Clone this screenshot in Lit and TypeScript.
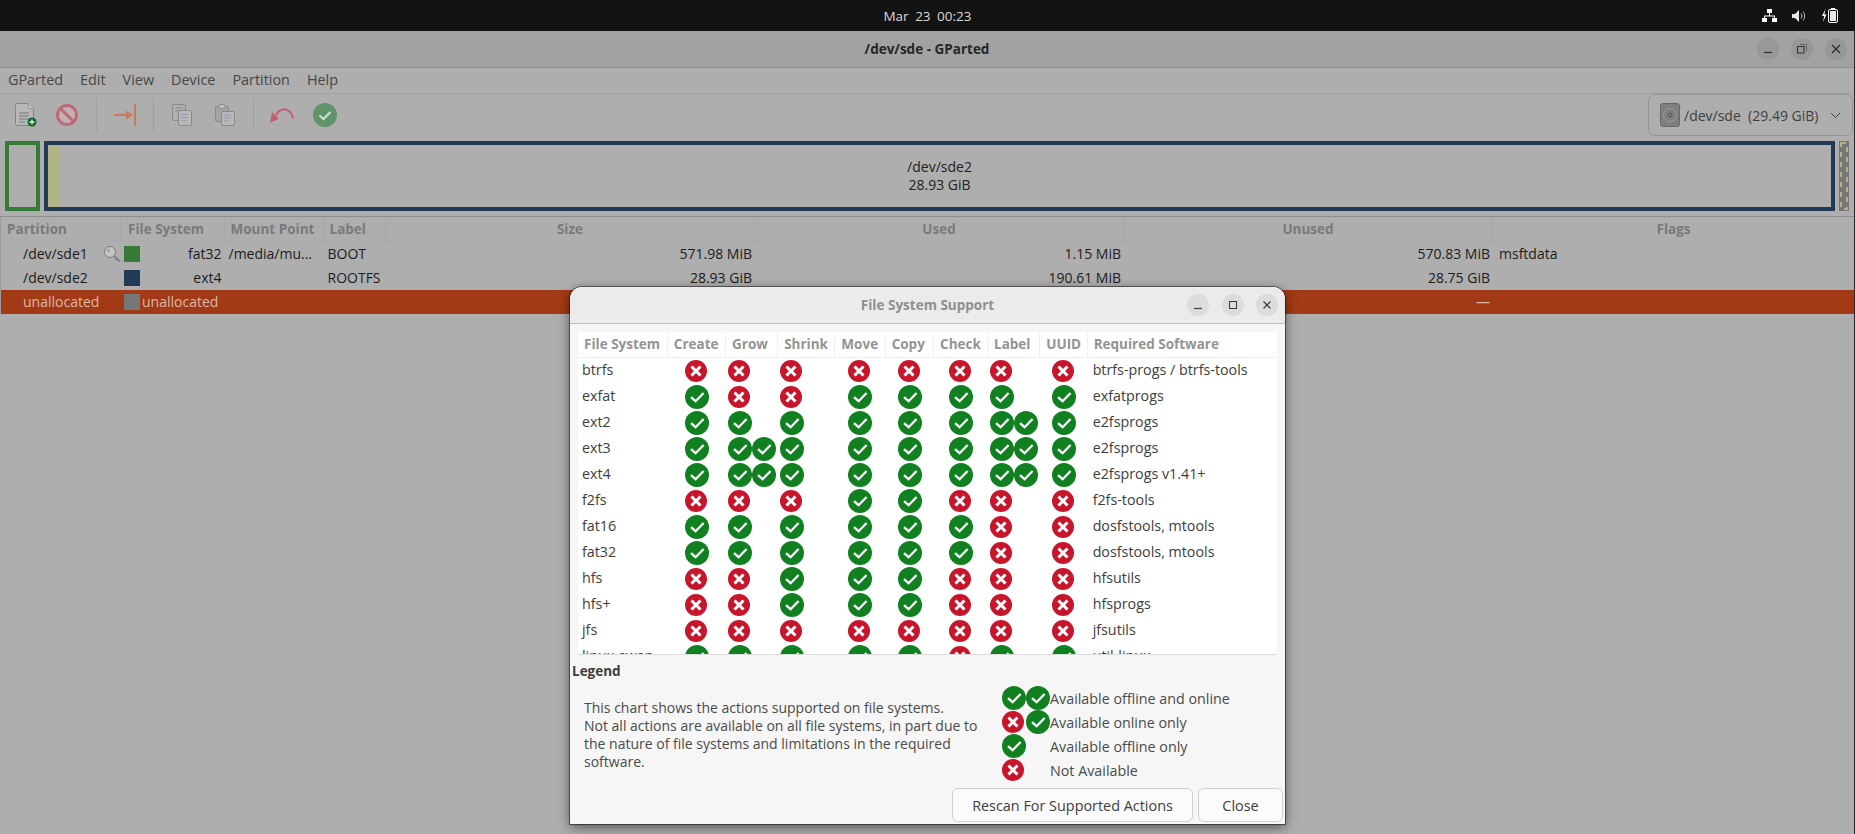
import { LitElement, html, css, svg } from 'lit';
import { customElement } from 'lit/decorators.js';

type Mark = 'y' | 'n' | 'b' | 'o';

const FS_COLUMNS = ['File System', 'Create', 'Grow', 'Shrink', 'Move', 'Copy', 'Check', 'Label', 'UUID', 'Required Software'];

const FS_ROWS: [string, string, string][] = [
  ['btrfs', 'nnnnnnnn', 'btrfs-progs / btrfs-tools'],
  ['exfat', 'ynnyyyyy', 'exfatprogs'],
  ['ext2', 'yyyyyyby', 'e2fsprogs'],
  ['ext3', 'ybyyyyby', 'e2fsprogs'],
  ['ext4', 'ybyyyyby', 'e2fsprogs v1.41+'],
  ['f2fs', 'nnnyynnn', 'f2fs-tools'],
  ['fat16', 'yyyyyynn', 'dosfstools, mtools'],
  ['fat32', 'yyyyyynn', 'dosfstools, mtools'],
  ['hfs', 'nnyyynnn', 'hfsutils'],
  ['hfs+', 'nnyyynnn', 'hfsprogs'],
  ['jfs', 'nnnnnnnn', 'jfsutils'],
  ['linux-swap', 'yyyyynyy', 'util-linux'],
];

const PARTITIONS = [
  { name: '/dev/sde1', key: true, swatch: 'fat', fs: 'fat32', mount: '/media/mu...', label: 'BOOT', size: '571.98 MiB', used: '1.15 MiB', unused: '570.83 MiB', flags: 'msftdata' },
  { name: '/dev/sde2', key: false, swatch: 'ext', fs: 'ext4', mount: '', label: 'ROOTFS', size: '28.93 GiB', used: '190.61 MiB', unused: '28.75 GiB', flags: '' },
];

const yes = () => html`<svg class="mark" width="24" height="24" viewBox="0 0 24 24">
  <circle cx="12" cy="12" r="12" fill="#108020"/>
  <path d="M6 12.2l4.6 4L18.6 8" fill="none" stroke="#fff" stroke-width="2.3"/>
</svg>`;

const no = () => html`<svg class="mark" width="22" height="22" viewBox="0 0 22 22">
  <circle cx="11" cy="11" r="11" fill="#c7162b"/>
  <path d="M6.500 6.500l9 9M15.500 6.500l-9 9" fill="none" stroke="#fff" stroke-width="3"/>
</svg>`;

function marks(m: Mark) {
  if (m === 'y') return html`<span class="slot">${yes()}</span>`;
  if (m === 'n') return html`<span class="slot">${no()}</span>`;
  if (m === 'b') return html`<span class="slot">${yes()}</span><span class="slot">${yes()}</span>`;
  return html`<span class="slot">${no()}</span><span class="slot">${yes()}</span>`;
}

const docLines = svg`<path d="M11 11h7M11 14h7M11 17h5" stroke="#9a98bc" stroke-width="1" fill="none"/>`;

@customElement('app-root')
export class AppRoot extends LitElement {
  static styles = css`
    :host {
      display: block;
      position: relative;
      width: 1855px;
      height: 834px;
      overflow: hidden;
      background: #aeaeae;
      font-family: "Open Sans", "Noto Sans", sans-serif;
      font-size: 14px;
      color: #1c1c1c;
    }
    svg { display: block; flex: none; }

    .topbar {
      height: 31px;
      background: #131313;
      color: #d8d8d8;
      display: grid;
      grid-template-columns: 1fr auto 1fr;
      align-items: center;
      font-size: 13.5px;
    }
    .clock { word-spacing: 3px; }
    .tray { display: flex; justify-content: flex-end; align-items: center; gap: 15px; padding-right: 17px; }

    .win { border-right: 1px solid #33202c; height: 803px; }
    .titlebar {
      height: 36px;
      background: #a2a2a2;
      border-bottom: 1px solid #8b8b8b;
      display: grid;
      grid-template-columns: 1fr auto 1fr;
      align-items: center;
      font-weight: 700;
      font-size: 13.5px;
      color: #262626;
    }
    .controls { display: flex; justify-content: flex-end; gap: 12px; padding-right: 7px; }
    .ctl {
      width: 22px;
      height: 22px;
      border-radius: 50%;
      background: #979797;
      display: flex;
      align-items: center;
      justify-content: center;
    }
    .menu {
      height: 25px;
      box-sizing: border-box;
      height: 26px;
      padding: 0 0 2px 8px;
      border-bottom: 1px solid #a0a0a0;
      display: flex;
      align-items: center;
      gap: 17px;
      color: #474747;
      font-size: 14.4px;
    }
    .toolbar {
      height: 47px;
      display: flex;
      align-items: center;
      padding: 0 1px 5px 15px;
      box-sizing: border-box;
    }
    .tools { display: flex; align-items: center; gap: 19px; }
    .tools.wide { gap: 23px; }
    .sep { width: 1px; height: 34px; background: #a0a0a0; margin: 0 17px 0 18px; }
    .sep.b { margin: 0 18px 0 17px; }
    .sep.c { margin: 0 16px 0 18px; }
    .combo {
      margin-left: auto;
      width: 205px;
      height: 42px;
      box-sizing: border-box;
      border: 1px solid #949494;
      border-radius: 7px;
      display: flex;
      align-items: center;
      padding: 0 11px;
      gap: 4px;
      color: #404040;
    }
    .combo .chev { margin-left: auto; }

    .bar { height: 70px; display: flex; padding-left: 5px; margin-bottom: 5px; }
    .bar > * { box-sizing: border-box; height: 70px; }
    .p1 { width: 35px; border: 4px solid #357a35; margin-right: 4px; }
    .p2 {
      width: 1791px;
      border: 4px solid #213a55;
      margin-right: 4px;
      display: flex;
    }
    .p2 .usedbar { width: 11px; background: #b2b486; }
    .p2 .cap {
      flex: 1;
      display: flex;
      flex-direction: column;
      align-items: center;
      justify-content: center;
      line-height: 18px;
      margin-right: 11px;
      color: #222;
    }

    .grid {
      border-top: 1px solid #8e8e8e;
      border-left: 1px solid #9c9c9c;
    }
    .row {
      display: grid;
      grid-template-columns: 120px 103.5px 99px 62.5px 369px 369px 369px 1fr;
      height: 24px;
      align-items: center;
    }
    .row.head {
      height: 24px;
      border-bottom: 1px solid #a8a8a8;
      color: #7a7a7a;
      font-weight: 700;
      font-size: 13.5px;
    }
    .row.head > div { border-right: 1px solid #a8a8a8; height: 24px; line-height: 24px; padding-left: 6px; box-sizing: border-box; }
    .row.head > .fshead { padding-left: 7px; }
    .row.head > .mid { text-align: center; padding-left: 0; }
    .row.head > div:last-child { border-right: none; }
    .row.sel { background: #a23a16; color: #d9b8a8; }
    .name { padding-left: 22px; display: flex; align-items: center; justify-content: space-between; }
    .name span { padding-bottom: 2px; }
    .fs { display: flex; align-items: center; padding-left: 3px; }
    .swatch { width: 16px; height: 16px; flex: none; }
    .swatch.fat { background: #357a35; }
    .swatch.ext { background: #213a55; }
    .swatch.none { background: #777; }
    .fs .txt { flex: 1; text-align: right; padding: 0 3px 2px 0; }
    .fs .left { padding: 0 0 2px 2px; }
    .mount, .lab { padding: 0 0 2px 4px; }
    .num { text-align: right; padding: 0 3px 2px 0; }
    .flagtxt { padding: 0 0 2px 6px; }

    .dialog {
      position: absolute;
      left: 570px;
      top: 287px;
      width: 715px;
      height: 537px;
      background: #f6f6f6;
      border-radius: 12px 12px 0 0;
      box-shadow: 0 0 0 1px rgba(0, 0, 0, 0.45), 0 3px 12px rgba(0, 0, 0, 0.55);
      color: #3d3d3d;
    }
    .dtitle {
      height: 36px;
      background: #ebebeb;
      border-radius: 12px 12px 0 0;
      border-bottom: 1px solid #bfbfbf;
      display: grid;
      grid-template-columns: 1fr auto 1fr;
      align-items: center;
      font-weight: 700;
      font-size: 13.5px;
      color: #8f8f8f;
    }
    .dtitle .ctl { background: #dcdcdc; }
    .dcontrols { display: flex; justify-content: flex-end; gap: 12.5px; padding-right: 7px; }
    .chart {
      margin: 8px 8px 0;
      height: 323px;
      background: #fff;
      overflow: hidden;
      border-bottom: 1px solid #dcdcdc;
      box-sizing: border-box;
      font-size: 14.3px;
    }
    .frow {
      display: grid;
      grid-template-columns: 89.8px 58.2px 52.2px 57.2px 50.3px 48.4px 54px 52.2px 47.4px 1fr;
      height: 26px;
      align-items: center;
    }
    .frow.fhead {
      height: 25px;
      border-bottom: 1px solid #f0f0f0;
      color: #939393;
      font-weight: 700;
      font-size: 13.5px;
    }
    .fhead > div { border-right: 1px solid #f0f0f0; height: 25px; line-height: 25px; padding-left: 6px; box-sizing: border-box; white-space: nowrap; overflow: hidden; }
    .fhead > div:last-child { border-right: none; }
    .fname { padding: 0 0 4px 4px; }
    .fsoft { padding: 0 0 4px 5px; }
    .cellm { display: flex; align-items: center; height: 26px; }
    .c1 { padding-left: 17.6px; }
    .c2 { padding-left: 2.4px; }
    .c3 { padding-left: 2.2px; }
    .c4 { padding-left: 13px; }
    .c5 { padding-left: 12.7px; }
    .c6 { padding-left: 15.3px; }
    .c7 { padding-left: 2.3px; }
    .c8 { padding-left: 12.1px; }
    .slot { width: 24px; height: 24px; flex: none; display: flex; align-items: center; }

    .legendhead { font-weight: 700; font-size: 13.5px; padding: 6px 0 0 2px; line-height: 20px; color: #3d3d3d; }
    .legend { display: flex; height: 98px; }
    .para { width: 432px; padding: 17.5px 0 0 14px; box-sizing: border-box; line-height: 18px; color: #4a4a4a; }
    .key { display: grid; grid-template-columns: 48px auto; grid-auto-rows: 24px; align-items: center; margin-top: 5px; font-size: 14.3px; }
    .key .pair { display: flex; align-items: center; }
    .key .t { color: #4a4a4a; }

    .buttons { display: flex; justify-content: flex-end; gap: 5px; padding-right: 2px; margin-top: 9px; }
    .btn {
      height: 34px;
      box-sizing: border-box;
      border: 1px solid #cfcfcf;
      border-radius: 6px;
      background: #fbfbfb;
      display: flex;
      align-items: center;
      justify-content: center;
      color: #3d3d3d;
      font-size: 14.4px;
    }
    .btn.rescan { width: 241px; }
    .btn.close { width: 85px; }
  `;

  render() {
    return html`
      <div class="topbar">
        <span></span>
        <span class="clock">Mar 23 00:23</span>
        <div class="tray">
          <svg width="15" height="14" viewBox="0 0 15 14" fill="#fff">
            <path d="M5 0h5v4H5zM0 9h5v4H0zM10 9h5v4h-5zM7 4h1v2.500h5V9h-1V7.500H3V9H2V6.500h5z"/>
          </svg>
          <svg width="14" height="12" viewBox="0 0 14 12">
            <path d="M0 4h3l4-4v12L3 8H0z" fill="#e8e8e8"/>
            <path d="M9 3.500a4 4 0 0 1 0 5M11 1.500a7 7 0 0 1 0 9" stroke="#bbb" fill="none"/>
          </svg>
          <svg width="17" height="15" viewBox="0 0 17 15">
            <path d="M4.500 1L1 8h2.200L2 14l3.500-7.500H3.300z" fill="#fff"/>
            <rect x="7.500" y="1.500" width="9" height="13" rx="1.500" fill="#131313" stroke="#fff"/>
            <rect x="9" y="3" width="6" height="10" fill="#e8e8e8"/>
            <rect x="10" y="0" width="4" height="1.500" fill="#fff"/>
          </svg>
        </div>
      </div>

      <div class="win">
        <div class="titlebar">
          <span></span>
          <span>/dev/sde - GParted</span>
          <div class="controls">
            <div class="ctl"><svg width="12" height="12" viewBox="0 0 12 12"><path d="M2 9.500h8" stroke="#2c2c2c" stroke-width="1.200"/></svg></div>
            <div class="ctl"><svg width="12" height="12" viewBox="0 0 12 12" fill="none" stroke="#2c2c2c"><rect x="1.500" y="3.500" width="6.500" height="6.500"/><path d="M4 1.500h6.500V8" stroke="#666"/></svg></div>
            <div class="ctl"><svg width="12" height="12" viewBox="0 0 12 12"><path d="M2 2l8 8M10 2l-8 8" stroke="#2c2c2c" stroke-width="1.200"/></svg></div>
          </div>
        </div>

        <div class="menu">
          <span>GParted</span><span>Edit</span><span>View</span><span>Device</span><span>Partition</span><span>Help</span>
        </div>

        <div class="toolbar">
          <div class="tools">
            <svg width="22" height="24" viewBox="0 0 22 24">
              <path d="M.5 2.500a2 2 0 0 1 2-2h11l5 5v15a2 2 0 0 1-2 2h-14a2 2 0 0 1-2-2z" fill="#b8b8b8" stroke="#868686"/>
              <path d="M13.500.5v5h5" fill="#c8c8c8" stroke="#969696"/>
              <path d="M4 10h10M4 13h10M4 16h10M4 19h6" stroke="#777" stroke-width="1"/>
              <circle cx="17" cy="19" r="4.500" fill="#0b6a26"/>
              <path d="M17 16.500v5M14.500 19h5" stroke="#e8f0e8" stroke-width="1.300"/>
            </svg>
            <svg width="22" height="22" viewBox="0 0 22 22">
              <circle cx="11" cy="11" r="9.500" fill="#c4b0b3" stroke="#bc6a76" stroke-width="3"/>
              <path d="M4.500 4.500l13 13" stroke="#bc6a76" stroke-width="3"/>
            </svg>
          </div>
          <div class="sep"></div>
          <svg width="22" height="22" viewBox="0 0 22 22">
            <path d="M0 11h13" stroke="#c67a5c" stroke-width="2"/>
            <path d="M12 6.500l7 4.500-7 4.500z" fill="#c67a5c"/>
            <path d="M21 0v22" stroke="#c67a5c" stroke-width="2"/>
          </svg>
          <div class="sep b"></div>
          <div class="tools wide">
            <svg width="20" height="22" viewBox="0 0 20 22">
              <rect x=".5" y=".5" width="13" height="16" rx="1.500" fill="#b0b0b0" stroke="#8a8a8a"/>
              <path d="M3 4h8M3 7h5" stroke="#8a8a8a"/>
              <rect x="6.500" y="6.500" width="13" height="15" rx="1.500" fill="#b8b8b8" stroke="#8a8a8a"/>
              <g transform="translate(-2 -.5)">${docLines}</g>
            </svg>
            <svg width="20" height="22" viewBox="0 0 20 22">
              <rect x=".5" y="2.500" width="13" height="15" rx="1.500" fill="#a4a4a4" stroke="#8a8a8a"/>
              <rect x="4" y=".5" width="6" height="4" rx="1" fill="#c0c0c0" stroke="#8a8a8a"/>
              <rect x="6.500" y="7.500" width="13" height="14" rx="1.500" fill="#b8b8b8" stroke="#8a8a8a"/>
              <g transform="translate(-2 0)">${docLines}</g>
            </svg>
          </div>
          <div class="sep c"></div>
          <div class="tools">
            <svg width="24" height="24" viewBox="0 0 24 24">
              <path d="M6 12.500C8 7 14 4.500 19 8c2 1.500 3.500 4 4 7.500" fill="none" stroke="#c46070" stroke-width="2"/>
              <path d="M0 19.500L2 9l7 7z" fill="#c46070"/>
            </svg>
            <svg width="24" height="24" viewBox="0 0 24 24">
              <circle cx="12" cy="12" r="12" fill="#5e9467"/>
              <path d="M6.500 12.500l4 3.500 7-7" fill="none" stroke="#d0dcd0" stroke-width="2.300"/>
            </svg>
          </div>
          <div class="combo">
            <svg width="20" height="24" viewBox="0 0 20 24">
              <rect x=".5" y=".5" width="19" height="23" rx="2.500" fill="#7e7e7e" stroke="#666"/>
              <circle cx="10" cy="12" r="6.500" fill="none" stroke="#9c9c9c"/>
              <circle cx="10" cy="12" r="2" fill="none" stroke="#555"/>
            </svg>
            <span>/dev/sde&nbsp; (29.49 GiB)</span>
            <svg class="chev" width="11" height="7" viewBox="0 0 11 7"><path d="M1 1l4.500 4.500L10 1" fill="none" stroke="#404040"/></svg>
          </div>
        </div>

        <div class="bar">
          <div class="p1"></div>
          <div class="p2">
            <div class="usedbar"></div>
            <div class="cap"><span>/dev/sde2</span><span>28.93 GiB</span></div>
          </div>
          <svg width="10" height="70" viewBox="0 0 10 70">
            <rect width="10" height="70" fill="#777"/>
            <rect x="2" y="2" width="6" height="66" fill="none" stroke="#b2b486" stroke-width="2" stroke-dasharray="5 5"/>
          </svg>
        </div>

        <div class="grid">
          <div class="row head">
            <div>Partition</div><div class="fshead">File System</div><div>Mount Point</div><div>Label</div>
            <div class="mid">Size</div><div class="mid">Used</div><div class="mid">Unused</div><div class="mid">Flags</div>
          </div>
          ${PARTITIONS.map(
            (p) => html`<div class="row">
              <div class="name">
                <span>${p.name}</span>
                ${p.key
                  ? html`<svg width="17" height="16" viewBox="0 0 17 16" fill="none" stroke="#7c7c7c">
                      <circle cx="6" cy="6" r="5.500" fill="#c4c4c4"/>
                      <circle cx="4.500" cy="4.500" r="1.200" fill="#8e8e8e" stroke="none"/>
                      <path d="M10 10l6 5.500M13 12.500l-1.500 1.500" stroke-width="1.600"/>
                    </svg>`
                  : ''}
              </div>
              <div class="fs"><span class="swatch ${p.swatch}"></span><span class="txt">${p.fs}</span></div>
              <div class="mount">${p.mount}</div>
              <div class="lab">${p.label}</div>
              <div class="num">${p.size}</div>
              <div class="num">${p.used}</div>
              <div class="num">${p.unused}</div>
              <div class="flagtxt">${p.flags}</div>
            </div>`
          )}
          <div class="row sel">
            <div class="name"><span>unallocated</span></div>
            <div class="fs"><span class="swatch none"></span><span class="left">unallocated</span></div>
            <div></div>
            <div></div>
            <div></div>
            <div></div>
            <div class="num">—</div>
            <div></div>
          </div>
        </div>
      </div>

      <div class="dialog">
        <div class="dtitle">
          <span></span>
          <span>File System Support</span>
          <div class="dcontrols">
            <div class="ctl"><svg width="12" height="12" viewBox="0 0 12 12"><path d="M2 9.500h8" stroke="#3a3a3a" stroke-width="1.200"/></svg></div>
            <div class="ctl"><svg width="12" height="12" viewBox="0 0 12 12"><rect x="2.500" y="2.500" width="7" height="7" fill="none" stroke="#3a3a3a"/></svg></div>
            <div class="ctl"><svg width="12" height="12" viewBox="0 0 12 12"><path d="M2.500 2.500l7 7M9.500 2.500l-7 7" stroke="#3a3a3a" stroke-width="1.200"/></svg></div>
          </div>
        </div>

        <div class="chart">
          <div class="frow fhead">${FS_COLUMNS.map((c) => html`<div>${c}</div>`)}</div>
          ${FS_ROWS.map(
            ([name, m, soft]) => html`<div class="frow">
              <div class="fname">${name}</div>
              ${[...m].map((v, i) => html`<div class="cellm c${i + 1}">${marks(v as Mark)}</div>`)}
              <div class="fsoft">${soft}</div>
            </div>`
          )}
        </div>

        <div class="legendhead">Legend</div>
        <div class="legend">
          <div class="para">
            This chart shows the actions supported on file systems.<br />
            Not all actions are available on all file systems, in part due to<br />
            the nature of file systems and limitations in the required<br />
            software.
          </div>
          <div class="key">
            <div class="pair">${marks('b')}</div><div class="t">Available offline and online</div>
            <div class="pair">${marks('o')}</div><div class="t">Available online only</div>
            <div class="pair">${marks('y')}</div><div class="t">Available offline only</div>
            <div class="pair">${marks('n')}</div><div class="t">Not Available</div>
          </div>
        </div>

        <div class="buttons">
          <div class="btn rescan">Rescan For Supported Actions</div>
          <div class="btn close">Close</div>
        </div>
      </div>
    `;
  }
}
